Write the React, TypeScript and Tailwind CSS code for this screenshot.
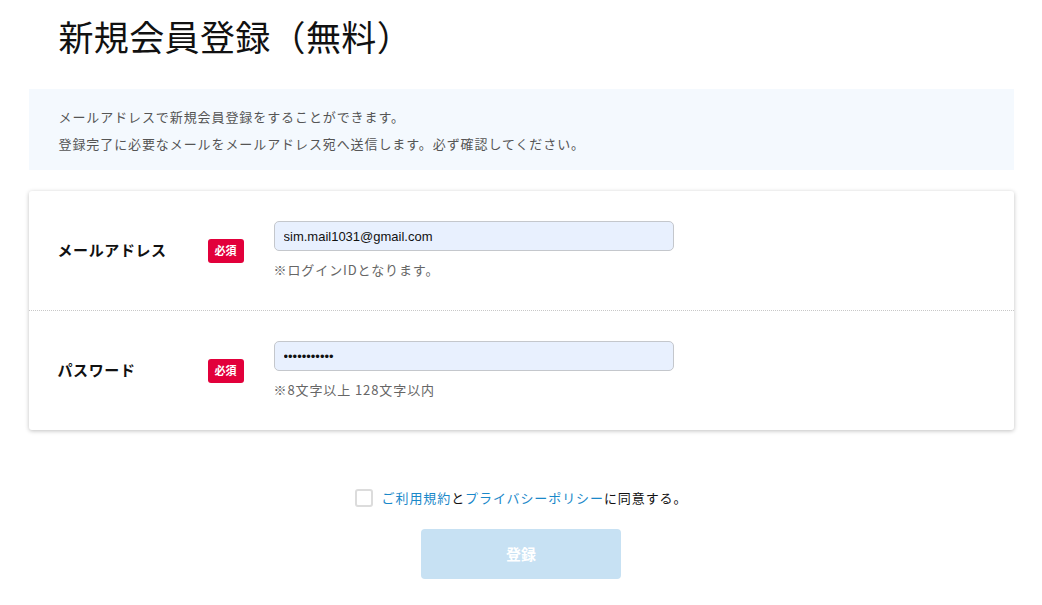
import React, { useState } from "react"

const jp = "font-['Hiragino_Sans','Noto_Sans_CJK_JP',sans-serif]"

function RequiredBadge() {
  return (
    <span className="inline-flex h-[24px] w-[36px] shrink-0 items-center justify-center rounded-[3px] bg-[#e2003b] text-[11px] font-bold text-white">
      必須
    </span>
  )
}

function FieldRow({
  label,
  hint,
  type,
  value,
  bordered,
}: {
  label: string
  hint: string
  type: string
  value: string
  bordered?: boolean
}) {
  return (
    <div
      className={
        "flex items-center pl-[29px] pr-[30px] py-[30px]" +
        (bordered ? " border-b border-dotted border-[#c8c8c8]" : "")
      }
    >
      <div className="w-[150px] shrink-0 text-[15px] font-bold tracking-[0.04em] text-[#111]">{label}</div>
      <RequiredBadge />
      <div className="ml-[30px] flex flex-col">
        <input
          type={type}
          defaultValue={value}
          className="h-[30px] w-[400px] rounded-[5px] border border-[#c4c7cc] bg-[#e8f0fe] px-[9px] font-['Liberation_Sans','Noto_Sans_CJK_JP',sans-serif] text-[13px] text-[#111] outline-none"
        />
        <p className="mt-[9px] text-[13px] leading-[20px] tracking-[0.07em] text-[#666]">{hint}</p>
      </div>
    </div>
  )
}

export default function App() {
  const [agreed, setAgreed] = useState(false)

  return (
    <div className={`${jp} min-h-screen bg-white`}>
      <div className="mx-auto w-[985px]">
        <h1 className="pl-[30px] pt-[10px] text-[35px] leading-[52px] font-normal tracking-[0.01em] text-[#111]">
          新規会員登録（無料）
        </h1>

        {/* notice */}
        <div className="mt-[27px] bg-[#f4f9fe] px-[30px] pt-[14px] pb-[13px] text-[13px] leading-[27px] tracking-[0.07em] text-[#555]">
          <p>メールアドレスで新規会員登録をすることができます。</p>
          <p>登録完了に必要なメールをメールアドレス宛へ送信します。必ず確認してください。</p>
        </div>

        {/* form card */}
        <div className="mt-[21px] rounded-[3px] bg-white shadow-[0_1px_4px_rgba(0,0,0,0.25)]">
          <FieldRow
            label="メールアドレス"
            hint="※ログインIDとなります。"
            type="email"
            value="sim.mail1031@gmail.com"
            bordered
          />
          <FieldRow
            label="パスワード"
            hint="※8文字以上 128文字以内"
            type="password"
            value="sim.mail103"
          />
        </div>

        <div className="mt-[58px] flex flex-col items-center">
          <label className="flex items-center gap-[9px] text-[13px] leading-[20px] tracking-[0.07em] text-[#111]">
            <input
              type="checkbox"
              checked={agreed}
              onChange={(e) => setAgreed(e.target.checked)}
              className="h-[18px] w-[18px] appearance-none rounded-[3px] border-2 border-[#dcdcdc] bg-white"
            />
            <span>
              <a className="text-[#1a88c9]">ご利用規約</a>と
              <a className="text-[#1a88c9]">プライバシーポリシー</a>に同意する。
            </span>
          </label>
          <button
            disabled={!agreed}
            className="mt-[21px] h-[50px] w-[200px] rounded-[4px] bg-[#c7e1f3] text-[15px] font-bold text-white"
          >
            登録
          </button>
        </div>
      </div>
    </div>
  )
}
